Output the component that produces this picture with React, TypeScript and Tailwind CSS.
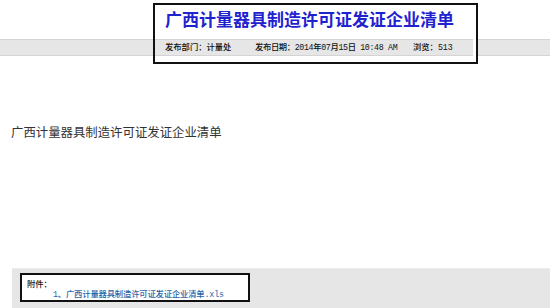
import React from "react";

const cjk = { fontFamily: '"Noto Sans CJK SC", "Noto Sans", sans-serif' };
const mono = { fontFamily: '"Liberation Mono", "Noto Sans CJK SC", monospace' };

export default function App() {
  return (
    <div className="flex h-[308px] w-[550px] flex-col overflow-hidden bg-white" style={cjk}>
      {/* header */}
      <div className="relative h-[66px] shrink-0">
        <div className="mt-[39px] h-[17px] border-y border-y-[#d4d4d4] bg-[#e6e6e6]" />
        <div className="absolute left-[153px] top-[3px] flex h-[61px] w-[325px] flex-col border-2 border-[#111] bg-white">
          <div className="h-[34px] pl-[10px] pt-[5px]">
            <h1
              className="text-[17px] font-bold leading-[17px] text-[#1f22cf]"
              style={cjk}
            >
              广西计量器具制造许可证发证企业清单
            </h1>
          </div>
          <div
            className="mr-[3px] flex h-[17px] items-center border-y border-y-[#d4d4d4] bg-[#e6e6e6] pl-[10px] text-[8.3px] font-medium leading-[10px] text-[#111]"
            style={mono}
          >
            <span className="w-[90px] shrink-0">发布部门：计量处</span>
            <span className="w-[158px] shrink-0 tracking-[-0.35px]">发布日期：2014年07月15日 10:48 AM</span>
            <span className="shrink-0">浏览：513</span>
          </div>
        </div>
      </div>

      {/* body */}
      <div className="pl-[11px] pt-[58px] text-[12.4px] leading-[16px] text-[#333]">
        广西计量器具制造许可证发证企业清单
      </div>

      <div className="flex-1" />

      {/* attachments */}
      <div className="ml-[12px] h-[40px] shrink-0 border-t border-t-[#ececec] bg-[#e6e6e6] pl-[8px] pt-[4px]">
        <div
          className="h-[29px] w-[230px] border-2 border-[#111] bg-white pl-[5px] pt-[5px] text-[8.3px] font-medium leading-[10px]"
          style={mono}
        >
          <div className="text-[#111]">附件：</div>
          <div className="pl-[26px] tracking-[-0.15px] text-[#1f65a8]">1、广西计量器具制造许可证发证企业清单.xls</div>
        </div>
      </div>
    </div>
  );
}
